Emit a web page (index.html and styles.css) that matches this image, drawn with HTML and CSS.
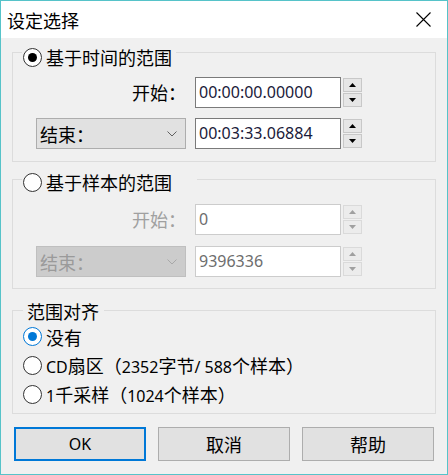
FILE: index.html
```html
<!DOCTYPE html>
<html lang="zh-CN">
<head>
<meta charset="utf-8">
<title>设定选择</title>
<link rel="stylesheet" href="styles.css">
</head>
<body>
<div class="window">
  <div class="titlebar">
    <span class="title">设定选择</span>
    <svg class="close" viewBox="0 0 15 15" width="15" height="15"><path d="M0.5 0.5L14.5 14.5M14.5 0.5L0.5 14.5" stroke="#000" stroke-width="1.1" fill="none"/></svg>
  </div>
  <div class="content">
    <div class="group g1">
      <div class="legend">
        <span class="radio on"></span><span>基于时间的范围</span>
      </div>
      <div class="row r1">
        <span class="label">开始：</span>
        <div class="textbox">00:00:00.00000</div>
        <div class="spin"><span><svg viewBox="0 0 7 4" width="7" height="4"><path d="M0 4L3.5 0L7 4Z"/></svg></span><span><svg viewBox="0 0 7 4" width="7" height="4"><path d="M0 0L3.5 4L7 0Z"/></svg></span></div>
      </div>
      <div class="row r2">
        <div class="combo">结束：<svg viewBox="0 0 10 6" width="10" height="6"><path d="M0.5 0.5L5 5L9.5 0.5" fill="none" stroke="currentColor" stroke-width="1"/></svg></div>
        <div class="textbox">00:03:33.06884</div>
        <div class="spin"><span><svg viewBox="0 0 7 4" width="7" height="4"><path d="M0 4L3.5 0L7 4Z"/></svg></span><span><svg viewBox="0 0 7 4" width="7" height="4"><path d="M0 0L3.5 4L7 0Z"/></svg></span></div>
      </div>
    </div>

    <div class="group g2 disabled">
      <div class="legend">
        <span class="radio"></span><span>基于样本的范围</span>
      </div>
      <div class="row r1">
        <span class="label">开始：</span>
        <div class="textbox">0</div>
        <div class="spin"><span><svg viewBox="0 0 7 4" width="7" height="4"><path d="M0 4L3.5 0L7 4Z"/></svg></span><span><svg viewBox="0 0 7 4" width="7" height="4"><path d="M0 0L3.5 4L7 0Z"/></svg></span></div>
      </div>
      <div class="row r2">
        <div class="combo">结束：<svg viewBox="0 0 10 6" width="10" height="6"><path d="M0.5 0.5L5 5L9.5 0.5" fill="none" stroke="currentColor" stroke-width="1"/></svg></div>
        <div class="textbox">9396336</div>
        <div class="spin"><span><svg viewBox="0 0 7 4" width="7" height="4"><path d="M0 4L3.5 0L7 4Z"/></svg></span><span><svg viewBox="0 0 7 4" width="7" height="4"><path d="M0 0L3.5 4L7 0Z"/></svg></span></div>
      </div>
    </div>

    <div class="group g3">
      <div class="legend">范围对齐</div>
      <div class="option first"><span class="radio on blue"></span><span>没有</span></div>
      <div class="option"><span class="radio"></span><span><span class="lat">CD</span>扇区（<span class="lat">2352</span>字节<span class="lat">/ 588</span>个样本）</span></div>
      <div class="option"><span class="radio"></span><span><span class="lat">1</span>千采样（<span class="lat">1024</span>个样本）</span></div>
    </div>

    <div class="buttons">
      <div class="btn default"><span class="lat">OK</span></div>
      <div class="btn">取消</div>
      <div class="btn">帮助</div>
    </div>
  </div>
</div>
</body>
</html>
```

FILE: styles.css
```css
* {
  box-sizing: border-box;
  margin: 0;
  padding: 0;
}

body {
  margin: 0;
  background: #f0f0f0;
  font-family: "Noto Sans CJK SC", "Noto Sans", sans-serif;
  font-size: 18px;
  color: #000;
}

.window {
  width: 448px;
  height: 475px;
  border: 1px solid #56c3c9;
  background: #f0f0f0;
  display: flex;
  flex-direction: column;
}

.titlebar {
  height: 37px;
  flex: none;
  background: #fff;
  display: flex;
  align-items: center;
  justify-content: space-between;
  padding: 0 16px 0 6px;
}

.title {
  font-size: 18px;
  line-height: 20px;
}

.close {
  display: block;
}

.content {
  padding: 14px 11px 0;
  display: flex;
  flex-direction: column;
}

.group {
  border: 1px solid #dcdcdc;
  display: flex;
  flex-direction: column;
}

.legend {
  display: flex;
  align-items: center;
  height: 20px;
  line-height: 20px;
  background: #f0f0f0;
  align-self: flex-start;
}

.g1 {
  padding-bottom: 12px;
}

.g1 .legend {
  margin: -6px 0 0 9px;
  padding: 0 4px 0 1px;
}

.g2 {
  margin-top: 17px;
  padding-bottom: 11px;
}

.g2 .legend {
  margin: -8px 0 0 9px;
  padding: 0 25px 0 1px;
}

.g3 {
  margin-top: 21px;
  padding-bottom: 4px;
}

.g3 .legend {
  margin: -10px 0 0 10px;
  padding: 0 5px 0 4px;
}

.radio {
  width: 19px;
  height: 19px;
  flex: none;
  border-radius: 50%;
  border: 1px solid #333;
  background: #fff;
  display: flex;
  align-items: center;
  justify-content: center;
  margin-right: 4px;
}

.radio.on::after {
  content: "";
  width: 9px;
  height: 9px;
  border-radius: 50%;
  background: #000;
}

.radio.blue {
  border-color: #0078d7;
}

.radio.blue::after {
  background: #0078d7;
}

.row {
  display: flex;
  align-items: flex-start;
  height: 31px;
  margin-left: 23px;
}

.g1 .r1 { margin-top: 10px; }
.g1 .r2 { margin-top: 10px; }
.g2 .r1 { margin-top: 12px; }
.g2 .r2 { margin-top: 11px; }

.label {
  width: 150px;
  text-align: right;
  line-height: 31px;
}

.combo {
  width: 150px;
  height: 31px;
  border: 1px solid #adadad;
  background: #e1e1e1;
  display: flex;
  align-items: center;
  justify-content: space-between;
  padding: 0 8px 0 3px;
  line-height: 20px;
  color: #000;
}

.combo svg {
  display: block;
  color: #606060;
  margin-top: 1px;
}

.textbox {
  width: 146px;
  height: 31px;
  margin-left: 9px;
  border: 1px solid #7a7a7a;
  background: #fff;
  font-family: "Noto Sans", sans-serif;
  font-size: 16px;
  line-height: 29px;
  padding-left: 3px;
  color: #1a1a3a;
}

.spin {
  margin-left: 2px;
  margin-top: 1px;
  width: 19px;
  display: flex;
  flex-direction: column;
  gap: 1px;
}

.spin span {
  height: 14px;
  border: 1px solid #c8c8c8;
  background: #e6e6e6;
  display: flex;
  align-items: center;
  justify-content: center;
}

.spin svg {
  display: block;
  fill: #000;
}

.disabled .label {
  color: #a0a0a0;
}

.disabled .combo {
  background: #cccccc;
  border-color: #bfbfbf;
  color: #9a9a9a;
}

.disabled .combo svg {
  color: #a8a8a8;
}

.disabled .textbox {
  border-color: #cccccc;
  color: #6d6d6d;
}

.disabled .spin span {
  border-color: #dadada;
  background: #ececec;
}

.disabled .spin svg {
  fill: #a0a0a0;
}

.option {
  display: flex;
  align-items: center;
  height: 29px;
  padding-left: 10px;
  line-height: 20px;
}

.option.first {
  margin-top: 1px;
}

.lat {
  font-family: "Noto Sans", sans-serif;
  font-size: 16px;
}

.buttons {
  display: flex;
  gap: 12px;
  margin: 13px 0 0 2px;
}

.btn {
  width: 132px;
  height: 34px;
  border: 1px solid #adadad;
  background: #e1e1e1;
  display: flex;
  align-items: center;
  justify-content: center;
  line-height: 20px;
}

.btn.default {
  border: 2px solid #0078d7;
}
```
